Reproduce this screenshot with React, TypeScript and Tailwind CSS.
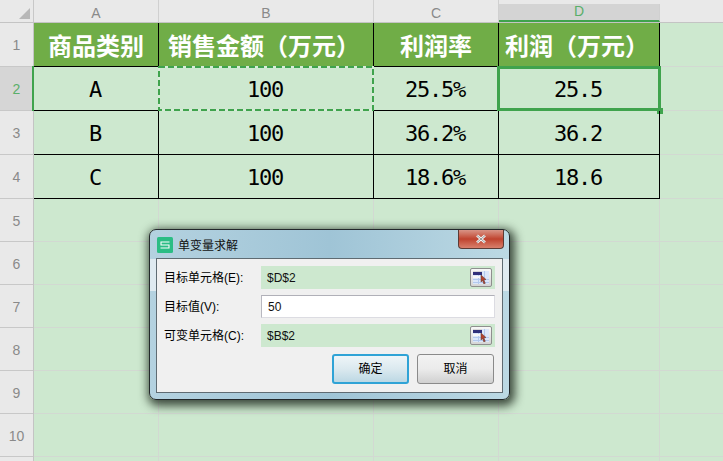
import React from "react";

const MONO = "font-['DejaVu_Sans_Mono','Noto_Sans_CJK_SC',monospace]";
const CJK = "font-['Noto_Sans_CJK_SC','Liberation_Sans',sans-serif]";
const UI = "font-['Liberation_Sans','Noto_Sans_CJK_SC',sans-serif]";

const rowHeights = [44, 44, 44, 44, 43, 43, 43, 43, 43, 43, 5];
const data = [
  ["A", "100", "25.5%", "25.5"],
  ["B", "100", "36.2%", "36.2"],
  ["C", "100", "18.6%", "18.6"],
];
const headers = ["商品类别", "销售金额\uFF08万元\uFF09", "利润率", "利润\uFF08万元\uFF09"];

function ColHead({ label, active, w }: { label: string; active?: boolean; w: string }) {
  return (
    <div
      className={`${w} flex items-end justify-center border-r border-[#d0d0d0] text-[14px] leading-[18px] ${UI} ${
        active
          ? "bg-[#d4d4d4] text-[#5aaf6a] mt-[4px] h-[18px] border-b-[2px] border-b-[#3fa34d] leading-[16px]"
          : "h-[22px] text-[#8a8a8a]"
      }`}
    >
      {label}
    </div>
  );
}

function RefIcon() {
  return (
    <div className="w-[22px] h-[19px] rounded-[2px] border border-[#8f8f8f] bg-gradient-to-b from-[#f8f8f8] to-[#d5d5d5] flex items-center justify-center">
      <svg width="16" height="13" viewBox="0 0 16 13">
        <rect x="0" y="0" width="16" height="13" fill="#dbe7fa" />
        <rect x="0" y="0" width="9" height="1" fill="#d8d8d8" />
        <rect x="0" y="1" width="9" height="3" fill="#30307a" />
        <path d="M0 8.500h16M0 11.500h16M5.500 4v9M11.500 0v13" stroke="#b3c9ee" strokeWidth="1" />
        <rect x="0" y="5" width="7" height="2" fill="#f7f7f7" />
        <path d="M8 4l5 4.500-2.200 .4 1.500 3.400-1.500 .6-1.300-3.500L8 11z" fill="#b5442e" stroke="#5b3a34" strokeWidth=".5" />
      </svg>
    </div>
  );
}

function Field({ label, value, icon, white }: { label: string; value: string; icon?: boolean; white?: boolean }) {
  return (
    <div className="flex items-center h-[23px]">
      <div className="w-[97px] shrink-0 text-[12px] leading-[16px] text-black whitespace-nowrap">{label}</div>
      <div
        className={`w-[234px] h-full flex items-center justify-between pl-[6px] pr-[3px] text-[12px] text-[#111] ${
          white ? "bg-white border border-[#dcdce2] border-t-[#b0b0b8] border-l-[#b8b8c0] pl-[5px]" : "bg-[#cde8cf]"
        }`}
      >
        <span>{value}</span>
        {icon && <RefIcon />}
      </div>
    </div>
  );
}

export default function App() {
  return (
    <div className="relative w-[723px] h-[461px] overflow-hidden bg-[#cde8cf]">
      <div className="flex h-[23px] bg-[#e9e9e9] border-b border-[#c4c4c4]">
        <div className="w-[34px] h-full border-r border-[#c8c8c8] flex items-end justify-end pr-[3px] pb-[3px]">
          <div className="w-0 h-0 border-l-[11px] border-l-transparent border-b-[11px] border-b-[#b8b8b8]" />
        </div>
        <ColHead label="A" w="w-[125px]" />
        <ColHead label="B" w="w-[215px]" />
        <ColHead label="C" w="w-[125px]" />
        <ColHead label="D" w="w-[161px]" active />
      </div>

      <div className="flex">
        <div className="w-[34px] shrink-0 bg-[#e9e9e9] border-r border-[#c4c4c4]">
          {rowHeights.map((h, i) => (
            <div
              key={i}
              style={{ height: h }}
              className={`flex items-center justify-center border-b border-[#c8c8c8] text-[14px] pt-[2px] ${UI} ${
                i === 1 ? "bg-[#d6d6d6] text-[#5aaf6a]" : "text-[#8a8a8a]"
              }`}
            >
              {i < 10 ? i + 1 : ""}
            </div>
          ))}
        </div>

        <div className="flex-1">
          <div className="grid grid-cols-[125px_215px_125px_161px_1fr]">
            {headers.map((t, i) => (
              <div
                key={t}
                className={`h-[44px] bg-[#70ad47] border-r border-b border-black flex items-center justify-center text-white text-[24px] leading-none font-bold whitespace-nowrap ${CJK} ${
                  i % 2 === 1 ? "pr-[4px]" : ""
                }`}
              >
                {t}
              </div>
            ))}
            <div className="h-[44px] border-b border-[#d2d9d2]" />
            {data.map((row, r) => (
              <React.Fragment key={r}>
                {row.map((v, c) => (
                  <div
                    key={c}
                    className={`relative h-[44px] pt-[2px] pr-[2px] border-r border-b border-black flex items-center justify-center text-[22px] leading-none tracking-[-1.2px] text-black ${MONO}`}
                  >
                    {v}
                    {r === 0 && c === 0 && <div className="absolute left-[-2px] top-[-1px] bottom-[-1px] w-[2px] bg-[#3fa34d]" />}
                    {r === 0 && c === 1 && (
                      <svg className="absolute left-[-1px] top-[-1px]" width="216" height="45">
                        <rect x="1" y="1" width="214" height="43" fill="none" stroke="#d8ecd9" strokeWidth="2" />
                        <rect x="1" y="1" width="214" height="43" fill="none" stroke="#3fa34d" strokeWidth="2" strokeDasharray="6 3" />
                      </svg>
                    )}
                    {r === 0 && c === 3 && (
                      <>
                        <div className="absolute left-[-2px] right-[-2px] top-[-1px] bottom-[-1px] border-[3px] border-[#3fa34d]" />
                        <div className="absolute right-[-4px] bottom-[-4px] w-[6px] h-[6px] bg-[#3fa34d]" />
                      </>
                    )}
                  </div>
                ))}
                <div className="h-[44px] border-b border-[#d2d9d2]" />
              </React.Fragment>
            ))}
            {rowHeights.slice(4).map((h, r) => (
              <React.Fragment key={r}>
                <div style={{ height: h }} className="border-r border-b border-[#d2d9d2]" />
                <div style={{ height: h }} className="border-r border-b border-[#d2d9d2]" />
                <div style={{ height: h }} className="border-r border-b border-[#d2d9d2]" />
                <div style={{ height: h }} className="border-r border-b border-[#d2d9d2]" />
                <div style={{ height: h }} className="border-b border-[#d2d9d2]" />
              </React.Fragment>
            ))}
          </div>
        </div>
      </div>

      {/* dialog */}
      <div
        className={`absolute left-[149px] top-[229px] w-[361px] h-[171px] rounded-[7px] border border-[#23282b] p-[6px] pt-0 shadow-[2px_3px_10px_3px_rgba(15,25,15,0.75)] bg-gradient-to-r from-[#b4d2e0] via-[#9fc4d6] to-[#bcd9e4] ${UI}`}
      >
        <div className="absolute left-0 top-[29px] w-[6px] h-[32px] bg-[#dfeaf0]" />
        <div className="absolute right-0 top-[29px] w-[6px] h-[32px] bg-[#dfeaf0]" />
        <div className="relative h-[28px] flex items-center pl-[1px] pt-[1px] gap-[5px]">
          <svg width="16" height="16" viewBox="0 0 16 16">
            <rect width="16" height="16" rx="1.500" fill="#2bbd84" />
            <path d="M12.500 5H4v3h8v3H3.500" fill="none" stroke="#fff" strokeWidth="1.100" />
          </svg>
          <span className={`text-[12px] text-[#111] ${CJK}`}>单变量求解</span>
          <div className="absolute right-[-1px] top-0 w-[46px] h-[19px] rounded-b-[4px] border border-[#5c3b35] border-t-0 bg-gradient-to-b from-[#d89486] via-[#bf422e] to-[#d87f6c] flex items-center justify-center">
            <svg width="12" height="10" viewBox="0 0 12 10">
              <path d="M2 1.500L10 8.500M10 1.500L2 8.500" stroke="#f4f4f4" strokeWidth="2.600" />
              <path d="M2 1.500L10 8.500M10 1.500L2 8.500" stroke="#5a5a5a" strokeWidth=".6" />
            </svg>
          </div>
        </div>
        <div className="relative h-[135px] bg-[#f0f0f0] border border-[#5f6b72] px-[7px] pt-[7px]">
          <div className="flex flex-col gap-[6px]">
            <Field label="目标单元格(E):" value="$D$2" icon />
            <Field label="目标值(V):" value="50" white />
            <Field label="可变单元格(C):" value="$B$2" icon />
          </div>
          <div className="flex justify-end gap-[8px] mt-[7px] w-[330px]">
            <button className="w-[77px] h-[30px] rounded-[3px] border-2 border-[#2fa3d6] bg-gradient-to-b from-[#eef5f8] via-[#dbe9ef] to-[#bcd8e4] text-[12px] text-black">
              确定
            </button>
            <button className="w-[77px] h-[30px] rounded-[3px] border border-[#8a8a8a] bg-gradient-to-b from-[#f3f3f3] via-[#ebebeb] to-[#d0d0d0] text-[12px] text-black">
              取消
            </button>
          </div>
        </div>
      </div>
    </div>
  );
}
